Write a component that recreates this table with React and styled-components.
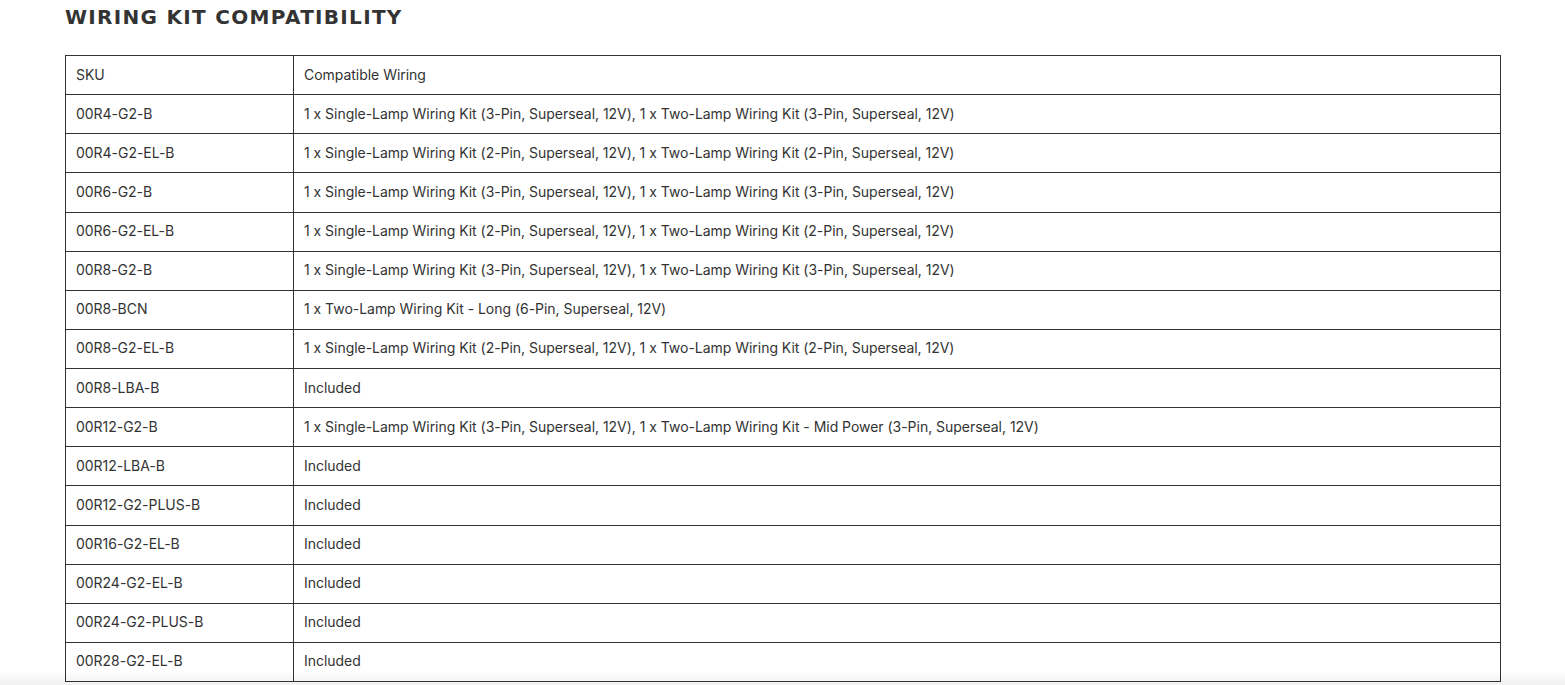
import styled, { createGlobalStyle } from 'styled-components';

const GlobalStyle = createGlobalStyle`
  html, body {
    margin: 0;
    padding: 0;
    background: #fff;
    font-family: "Inter", "Liberation Sans", sans-serif;
    color: #333;
  }
`;

const rows = [
  ['00R4-G2-B', '1 x Single-Lamp Wiring Kit (3-Pin, Superseal, 12V), 1 x Two-Lamp Wiring Kit (3-Pin, Superseal, 12V)'],
  ['00R4-G2-EL-B', '1 x Single-Lamp Wiring Kit (2-Pin, Superseal, 12V), 1 x Two-Lamp Wiring Kit (2-Pin, Superseal, 12V)'],
  ['00R6-G2-B', '1 x Single-Lamp Wiring Kit (3-Pin, Superseal, 12V), 1 x Two-Lamp Wiring Kit (3-Pin, Superseal, 12V)'],
  ['00R6-G2-EL-B', '1 x Single-Lamp Wiring Kit (2-Pin, Superseal, 12V), 1 x Two-Lamp Wiring Kit (2-Pin, Superseal, 12V)'],
  ['00R8-G2-B', '1 x Single-Lamp Wiring Kit (3-Pin, Superseal, 12V), 1 x Two-Lamp Wiring Kit (3-Pin, Superseal, 12V)'],
  ['00R8-BCN', '1 x Two-Lamp Wiring Kit - Long (6-Pin, Superseal, 12V)'],
  ['00R8-G2-EL-B', '1 x Single-Lamp Wiring Kit (2-Pin, Superseal, 12V), 1 x Two-Lamp Wiring Kit (2-Pin, Superseal, 12V)'],
  ['00R8-LBA-B', 'Included'],
  ['00R12-G2-B', '1 x Single-Lamp Wiring Kit (3-Pin, Superseal, 12V), 1 x Two-Lamp Wiring Kit - Mid Power (3-Pin, Superseal, 12V)'],
  ['00R12-LBA-B', 'Included'],
  ['00R12-G2-PLUS-B', 'Included'],
  ['00R16-G2-EL-B', 'Included'],
  ['00R24-G2-EL-B', 'Included'],
  ['00R24-G2-PLUS-B', 'Included'],
  ['00R28-G2-EL-B', 'Included'],
];

const Page = styled.div`
  padding: 0 65px;
`;

const Heading = styled.h2`
  margin: 0;
  padding-top: 6px;
  height: 55px;
  box-sizing: border-box;
  font-family: "DejaVu Sans", "Liberation Sans", sans-serif;
  font-weight: 700;
  font-size: 20px;
  letter-spacing: 1.3px;
  line-height: 22px;
  color: #333;
  text-transform: uppercase;
`;

const Table = styled.table`
  width: 1436px;
  border-collapse: collapse;
  font-size: 14px;
`;

const Cell = styled.td`
  border: 1px solid #333;
  height: 39.125px;
  padding: 0 10px 2px;
  box-sizing: border-box;
  width: ${p => (p.$narrow ? '228px' : 'auto')};
  color: #333;
  letter-spacing: -0.03px;
  white-space: nowrap;
`;

const BottomFade = styled.div`
  position: fixed;
  left: 0;
  right: 0;
  bottom: 0;
  height: 14px;
  background: linear-gradient(to bottom, rgba(0,0,0,0), rgba(0,0,0,0.06));
  pointer-events: none;
`;

export default function App() {
  return (
    <Page>
      <GlobalStyle />
      <Heading>Wiring Kit Compatibility</Heading>
      <Table>
        <tbody>
          <tr>
            <Cell $narrow>SKU</Cell>
            <Cell>Compatible Wiring</Cell>
          </tr>
          {rows.map(([sku, wiring]) => (
            <tr key={sku}>
              <Cell $narrow>{sku}</Cell>
              <Cell>{wiring}</Cell>
            </tr>
          ))}
        </tbody>
      </Table>
      <BottomFade />
    </Page>
  );
}
